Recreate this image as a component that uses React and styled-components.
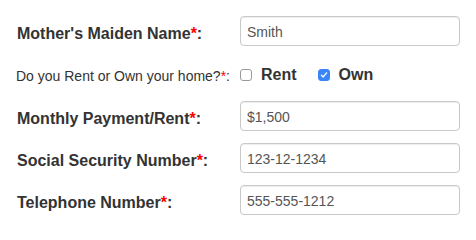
import React from "react";
import styled, { createGlobalStyle } from "styled-components";

const Global = createGlobalStyle`
  html, body { margin: 0; padding: 0; background: #fff; }
  body { font-family: "Liberation Sans", Arial, Helvetica, sans-serif; color: #333; }
`;

const Form = styled.form`
  width: 476px;
  padding: 16px 16px 0 17px;
  box-sizing: border-box;
  display: flex;
  flex-direction: column;
  gap: 12px;
`;

const Row = styled.div`
  display: flex;
  align-items: center;
  min-height: 30px;
  margin-top: ${(p) => p.$shift || 0}px;
`;

const Label = styled.label`
  width: 223px;
  flex: none;
  font-size: 16px;
  font-weight: bold;
  color: #333;
  line-height: 18px;
  padding-top: 5px;
`;

const SmallLabel = styled.label`
  width: 224px;
  margin-left: -1px;
  flex: none;
  font-size: 14px;
  color: #333;
  line-height: 16px;
  padding-top: 3px;
`;

const Star = styled.span`
  color: #ff0000;
`;

const Input = styled.input`
  width: 220px;
  height: 30px;
  box-sizing: border-box;
  padding: 0 6px;
  border: 1px solid #c9c9c9;
  border-radius: 4px;
  box-shadow: inset 0 1px 1px rgba(0, 0, 0, 0.075);
  font-family: "Liberation Sans", Arial, sans-serif;
  font-size: 14px;
  color: #555;
  outline: none;
  padding-top: 1px;
`;

const Choices = styled.div`
  display: flex;
  align-items: center;
  padding-top: 1px;
`;

const Choice = styled.label`
  display: flex;
  align-items: center;
  gap: 9px;
  margin-right: ${(p) => p.$gap || 0}px;
  font-size: 16px;
  font-weight: bold;
  color: #333;
  line-height: 18px;
`;

const Box = styled.span`
  width: 12px;
  height: 12px;
  box-sizing: border-box;
  border-radius: 3px;
  border: 1px solid ${(p) => (p.$checked ? "#3a86f7" : "#9a9a9a")};
  background: ${(p) => (p.$checked ? "#3a86f7" : "#fff")};
  display: flex;
  align-items: center;
  justify-content: center;
  margin-top: 1px;
`;

const Check = ({ checked }) => (
  <Box $checked={checked}>
    {checked && (
      <svg width="8" height="8" viewBox="0 0 8 8">
        <path d="M1.5 4.2 L3.2 5.9 L6.6 1.9" fill="none" stroke="#fff" strokeWidth="1.4" strokeLinecap="round" strokeLinejoin="round" />
      </svg>
    )}
  </Box>
);

const Field = ({ label, value }) => (
  <Row>
    <Label>
      {label}
      <Star>*</Star>:
    </Label>
    <Input defaultValue={value} />
  </Row>
);

export default function App() {
  return (
    <>
      <Global />
      <Form>
        <Field label="Mother's Maiden Name" value="Smith" />
        <Row $shift={1}>
          <SmallLabel>
            Do you Rent or Own your home?<Star>*</Star>:
          </SmallLabel>
          <Choices>
            <Choice $gap={21}>
              <Check checked={false} />
              Rent
            </Choice>
            <Choice>
              <Check checked={true} />
              Own
            </Choice>
          </Choices>
        </Row>
        <Field label="Monthly Payment/Rent" value="$1,500" />
        <Field label="Social Security Number" value="123-12-1234" />
        <Field label="Telephone Number" value="555-555-1212" />
      </Form>
    </>
  );
}
